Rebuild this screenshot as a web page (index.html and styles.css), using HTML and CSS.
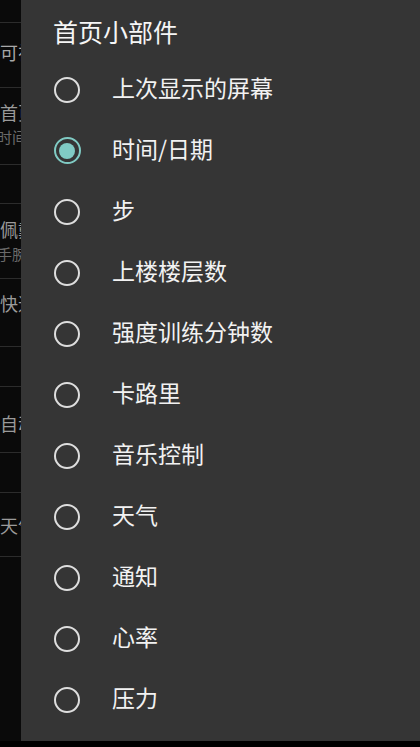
FILE: index.html
```html
<!DOCTYPE html>
<html lang="zh-CN">
<head>
<meta charset="utf-8">
<link rel="stylesheet" href="styles.css">
</head>
<body>
<div class="screen">
  <div class="settings">
    <div class="gap g1"></div>
    <div class="row r1"><span class="t">可视化设置</span></div>
    <div class="row r2"><span class="t">首页小部件</span><span class="s">时间/日期</span></div>
    <div class="row r3"></div>
    <div class="row r4"><span class="t">佩戴方式</span><span class="s">手腕</span></div>
    <div class="row r5"><span class="t">快速查看</span></div>
    <div class="row r6"></div>
    <div class="row r7"><span class="t">自动识别</span></div>
    <div class="row r8"></div>
    <div class="row r9"><span class="t">天气</span></div>
  </div>

  <div class="dialog">
    <div class="title">首页小部件</div>
    <ul class="options">
      <li class="opt"><span class="radio"></span><span class="label">上次显示的屏幕</span></li>
      <li class="opt"><span class="radio on"></span><span class="label">时间/日期</span></li>
      <li class="opt"><span class="radio"></span><span class="label">步</span></li>
      <li class="opt"><span class="radio"></span><span class="label">上楼楼层数</span></li>
      <li class="opt"><span class="radio"></span><span class="label">强度训练分钟数</span></li>
      <li class="opt"><span class="radio"></span><span class="label">卡路里</span></li>
      <li class="opt"><span class="radio"></span><span class="label">音乐控制</span></li>
      <li class="opt"><span class="radio"></span><span class="label">天气</span></li>
      <li class="opt"><span class="radio"></span><span class="label">通知</span></li>
      <li class="opt"><span class="radio"></span><span class="label">心率</span></li>
      <li class="opt"><span class="radio"></span><span class="label">压力</span></li>
    </ul>
  </div>
</div>
</body>
</html>
```

FILE: styles.css
```css
* { box-sizing: border-box; }
html, body {
  margin: 0;
  padding: 0;
  background: #000;
}
body {
  font-family: "Noto Sans CJK SC", "Noto Sans", sans-serif;
}
.screen {
  position: relative;
  width: 420px;
  height: 747px;
  overflow: hidden;
  background: #000;
}

/* underlying settings page */
.settings {
  width: 420px;
  height: 741px;
  background: #0a0a0a;
  display: flex;
  flex-direction: column;
}
.gap.g1 { height: 22px; }
.row {
  border-top: 1px solid #2c2c2c;
  display: flex;
  flex-direction: column;
  justify-content: center;
  white-space: nowrap;
  overflow: hidden;
  padding-left: 0;
}
.row .t {
  font-size: 18px;
  line-height: 22px;
  color: #9a9a9a;
}
.row .s {
  font-size: 15px;
  line-height: 20px;
  color: #6a6a6a;
  margin-top: 4px;
  margin-left: -3px;
}
.r1 { height: 65px; }
.r1 .t { color: #a8a8a8; margin-top: -6px; }
.r2 { height: 77px; }
.r2 .t { margin-top: -4px; }
.r3 { height: 39px; }
.r4 { height: 75px; }
.r5 { height: 68px; }
.r5 .t { margin-top: -20px; }
.r6 { height: 40px; }
.r7 { height: 66px; }
.r7 .t { margin-top: 6px; }
.r8 { height: 40px; }
.r9 { height: 65px; border-bottom: 1px solid #2c2c2c; }
.r9 .t { margin-top: 0; }

/* dialog */
.dialog {
  position: absolute;
  left: 21px;
  top: 0;
  right: 0;
  height: 741px;
  background: #353535;
  color: #f2f2f2;
}
.title {
  padding: 17px 0 0 32px;
  height: 59px;
  font-size: 25px;
  line-height: 28px;
  color: #f6f6f6;
}
.options {
  list-style: none;
  margin: 0;
  padding: 0;
}
.opt {
  height: 61px;
  display: flex;
  align-items: center;
  padding-left: 33px;
}
.radio {
  width: 26px;
  height: 26px;
  border: 2.5px solid #dedede;
  border-radius: 50%;
  display: flex;
  align-items: center;
  justify-content: center;
  flex: none;
}
.radio.on {
  border-color: #80cbc4;
  border-width: 2.7px;
  width: 27px;
  height: 27px;
  margin-left: -0.5px;
  margin-right: -0.5px;
}
.radio.on::after {
  content: "";
  width: 16px;
  height: 16px;
  border-radius: 50%;
  background: #80cbc4;
}
.label {
  margin-left: 32px;
  padding-bottom: 5px;
  font-size: 23px;
  line-height: 30px;
  color: #f2f2f2;
}
```
